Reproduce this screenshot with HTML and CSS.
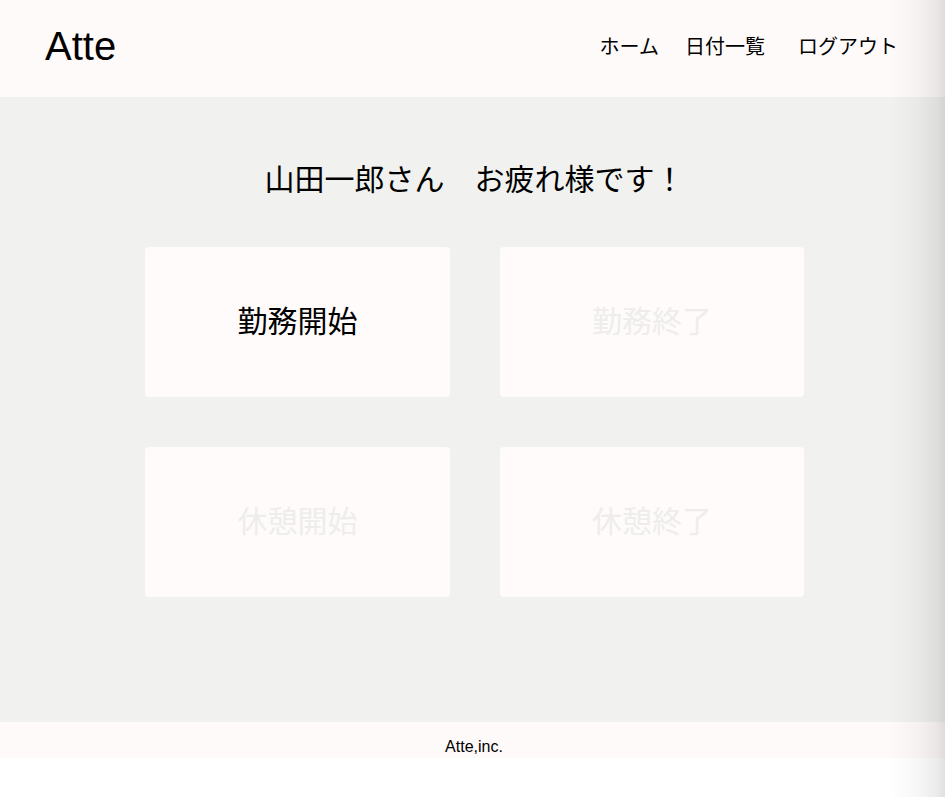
FILE: index.html
```html
<!DOCTYPE html>
<html lang="ja">
<head>
<meta charset="utf-8">
<title>Atte</title>
<link rel="stylesheet" href="styles.css">
</head>
<body>
<header class="header">
  <div class="logo">Atte</div>
  <nav class="nav">
    <a class="nav-link nav-home" href="#">ホーム</a>
    <a class="nav-link nav-date" href="#">日付一覧</a>
    <a class="nav-link nav-logout" href="#">ログアウト</a>
  </nav>
</header>
<main class="main">
  <h2 class="greeting">山田一郎さん　お疲れ様です！</h2>
  <div class="panel">
    <button class="stamp">勤務開始</button>
    <button class="stamp stamp-off">勤務終了</button>
    <button class="stamp stamp-off">休憩開始</button>
    <button class="stamp stamp-off">休憩終了</button>
  </div>
</main>
<footer class="footer">Atte,inc.</footer>
<div class="edge-shade"></div>
</body>
</html>
```
FILE: styles.css
```css
* { box-sizing: border-box; }
html, body { margin: 0; padding: 0; background: #ffffff; }
body {
  font-family: "Noto Sans CJK JP", "Liberation Sans", sans-serif;
  color: #000;
}
.header {
  height: 97px;
  background: #fefaf9;
  display: flex;
  align-items: center;
  justify-content: space-between;
  padding: 0 47px 6px 45px;
}
.logo {
  font-family: "Liberation Sans", Arial, sans-serif;
  font-size: 40px;
  line-height: 1;
}
.nav { display: flex; align-items: center; }
.nav-link {
  color: #000;
  text-decoration: none;
  font-size: 20px;
  line-height: 1;
}
.nav-date { margin-left: 26px; }
.nav-logout { margin-left: 33px; }
.main {
  background: #f1f1ef;
  padding: 60px 0 125px;
}
.greeting {
  margin: 0 0 50px;
  font-weight: normal;
  font-size: 30px;
  line-height: 40px;
  height: 40px;
  text-align: center;
  padding-left: 4px;
}
.panel {
  display: grid;
  grid-template-columns: 305px 304px;
  grid-auto-rows: 150px;
  column-gap: 50px;
  row-gap: 50px;
  margin-left: 145px;
}
.stamp {
  border: none;
  border-radius: 4px;
  background: #fefbfa;
  font-family: "Noto Sans CJK JP", sans-serif;
  font-size: 30px;
  color: #000;
  padding: 0 0 6px;
}
.stamp-off { color: #eeedec; }
.footer {
  height: 36px;
  background: #fefaf9;
  font-family: "Liberation Sans", Arial, sans-serif;
  font-size: 16px;
  display: flex;
  align-items: center;
  justify-content: center;
  padding-top: 14px;
  padding-left: 3px;
}
.edge-shade {
  position: fixed;
  top: 0;
  right: 0;
  width: 55px;
  height: 100%;
  pointer-events: none;
  background: linear-gradient(to right, rgba(0,0,0,0) 0%, rgba(0,0,0,0.03) 50%, rgba(0,0,0,0.08) 85%, rgba(0,0,0,0.12) 100%);
}
```
